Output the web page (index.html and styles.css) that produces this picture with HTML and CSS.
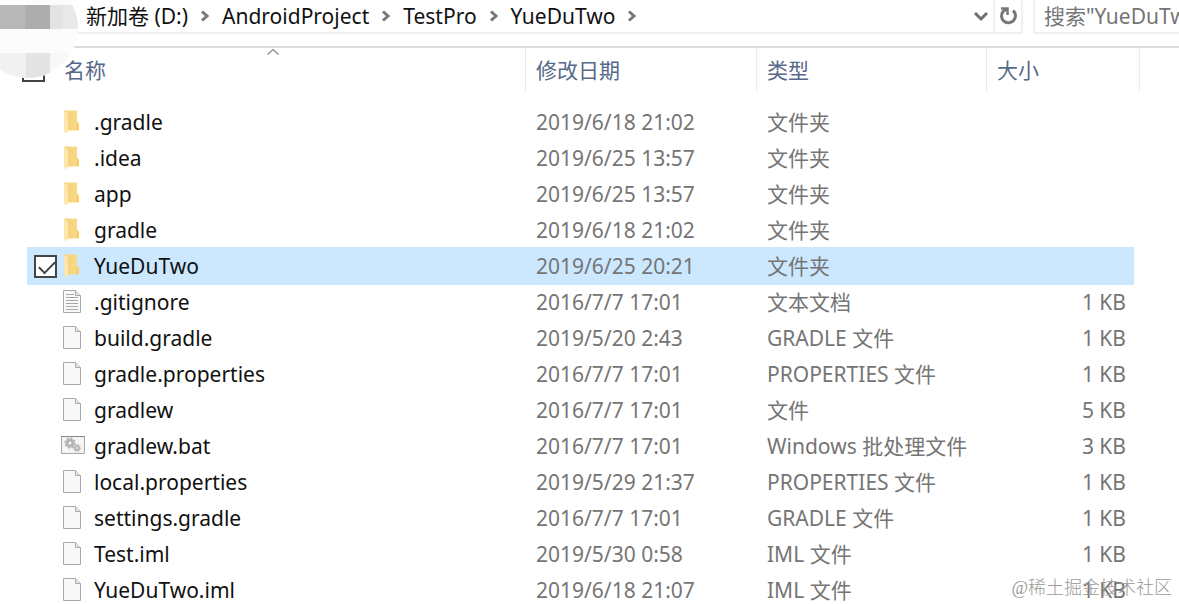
FILE: index.html
```html
<!DOCTYPE html>
<html lang="zh-CN">
<head>
<meta charset="utf-8">
<title>YueDuTwo</title>
<link rel="stylesheet" href="styles.css">
</head>
<body>
<svg class="defs" aria-hidden="true">
  <defs>
    <linearGradient id="fold" x1="0" y1="0" x2="1" y2="0"><stop offset="0" stop-color="#f3d07a"/><stop offset="1" stop-color="#fadb87"/></linearGradient>
    <symbol id="folder" viewBox="0 0 24 26">
      <path d="M3 1.500h13v11l2 2v7H6z" fill="url(#fold)"/>
      <path d="M15 13h1l2 2v6h-3z" fill="#f6cf70"/>
      <path d="M3 1.500l4 3v16l-1 4-3-2z" fill="#fce6ab"/>
    </symbol>
    <symbol id="page" viewBox="0 0 24 26">
      <path d="M2.500 1.500h12l5 5v17h-17z" fill="#f8f8f8" stroke="#a9a9a9"/>
      <path d="M14.500 1.500v5h5" fill="#e4e4e4" stroke="#a9a9a9"/>
    </symbol>
    <symbol id="text" viewBox="0 0 24 26">
      <use href="#page"/>
      <path d="M5 5.500h8M5 8.500h12M5 11.500h12M5 14.500h12M5 17.500h12M5 20.500h12" stroke="#a8a8a8"/>
    </symbol>
    <symbol id="batch" viewBox="0 0 24 26">
      <path d="M.5 3.500h23v17H.5z" fill="#f4f4f4" stroke="#a8a8a8"/>
      <path d="M0 3.500h24" stroke="#888"/>
      <circle cx="9" cy="10" r="3" fill="none" stroke="#b4b4b4" stroke-width="3"/>
      <circle cx="9" cy="10" r="5" fill="none" stroke="#b4b4b4" stroke-width="1.500" stroke-dasharray="2 1.900"/>
      <circle cx="16" cy="15" r="2" fill="none" stroke="#b4b4b4" stroke-width="2"/>
      <circle cx="16" cy="15" r="3.500" fill="none" stroke="#b4b4b4" stroke-dasharray="1.500 1.200"/>
    </symbol>
    <symbol id="chevron" viewBox="0 0 10 14"><path d="M2 2.500l5 4.500-5 4.500" fill="none" stroke="#777" stroke-width="3"/></symbol>
  </defs>
</svg>
<main class="explorer">
  <header class="toolbar">
    <nav class="address" aria-label="路径">
      <a href="#">新加卷 (D:)</a><svg class="chevron"><use href="#chevron"/></svg>
      <a href="#">AndroidProject</a><svg class="chevron"><use href="#chevron"/></svg>
      <a href="#">TestPro</a><svg class="chevron"><use href="#chevron"/></svg>
      <a href="#">YueDuTwo</a><svg class="chevron"><use href="#chevron"/></svg>
      <button class="history" type="button" aria-label="历史记录"><svg width="16" height="12" viewBox="0 0 16 12"><path d="M2 3l6 6 6-6" fill="none" stroke="#707070" stroke-width="3"/></svg></button>
    </nav>
    <button class="refresh" type="button" aria-label="刷新"><svg width="20" height="20" viewBox="0 0 20 20"><path d="M15 4.500A7 7 0 1 1 5 5.500L8.500 3" fill="none" stroke="#777" stroke-width="3"/><path d="M3 2.500h6.500V9" fill="none" stroke="#777" stroke-width="2.500"/></svg></button>
    <input class="search" type="text" aria-label="搜索" placeholder='搜索"YueDuTwo"'>
  </header>
  <table class="files">
    <colgroup><col class="col-check"><col><col class="col-date"><col class="col-type"><col class="col-size"><col class="col-end"></colgroup>
    <thead>
      <tr>
        <th class="check"><input class="box" type="checkbox" aria-label="全选"></th>
        <th class="name-head">名称<svg class="sort" width="14" height="8" viewBox="0 0 14 8"><path d="M1.500 6.500L7 1.500l5.500 5" fill="none" stroke="#888" stroke-width="1.200"/></svg></th>
        <th class="split">修改日期</th><th class="split">类型</th><th class="split end" colspan="2">大小</th>
      </tr>
    </thead>
    <tbody>
      <tr><td></td><td><span class="name"><svg class="icon"><use href="#folder"/></svg>.gradle</span></td><td>2019/6/18 21:02</td><td>文件夹</td><td></td><td></td></tr>
      <tr><td></td><td><span class="name"><svg class="icon"><use href="#folder"/></svg>.idea</span></td><td>2019/6/25 13:57</td><td>文件夹</td><td></td><td></td></tr>
      <tr><td></td><td><span class="name"><svg class="icon"><use href="#folder"/></svg>app</span></td><td>2019/6/25 13:57</td><td>文件夹</td><td></td><td></td></tr>
      <tr><td></td><td><span class="name"><svg class="icon"><use href="#folder"/></svg>gradle</span></td><td>2019/6/18 21:02</td><td>文件夹</td><td></td><td></td></tr>
      <tr class="selected"><td class="check"><input class="box" type="checkbox" aria-label="选择 YueDuTwo" checked></td><td><span class="name"><svg class="icon"><use href="#folder"/></svg>YueDuTwo</span></td><td>2019/6/25 20:21</td><td>文件夹</td><td></td><td></td></tr>
      <tr><td></td><td><span class="name"><svg class="icon"><use href="#text"/></svg>.gitignore</span></td><td>2016/7/7 17:01</td><td>文本文档</td><td>1 KB</td><td></td></tr>
      <tr><td></td><td><span class="name"><svg class="icon"><use href="#page"/></svg>build.gradle</span></td><td>2019/5/20 2:43</td><td>GRADLE 文件</td><td>1 KB</td><td></td></tr>
      <tr><td></td><td><span class="name"><svg class="icon"><use href="#page"/></svg>gradle.properties</span></td><td>2016/7/7 17:01</td><td>PROPERTIES 文件</td><td>1 KB</td><td></td></tr>
      <tr><td></td><td><span class="name"><svg class="icon"><use href="#page"/></svg>gradlew</span></td><td>2016/7/7 17:01</td><td>文件</td><td>5 KB</td><td></td></tr>
      <tr><td></td><td><span class="name"><svg class="icon"><use href="#batch"/></svg>gradlew.bat</span></td><td>2016/7/7 17:01</td><td>Windows 批处理文件</td><td>3 KB</td><td></td></tr>
      <tr><td></td><td><span class="name"><svg class="icon"><use href="#page"/></svg>local.properties</span></td><td>2019/5/29 21:37</td><td>PROPERTIES 文件</td><td>1 KB</td><td></td></tr>
      <tr><td></td><td><span class="name"><svg class="icon"><use href="#page"/></svg>settings.gradle</span></td><td>2016/7/7 17:01</td><td>GRADLE 文件</td><td>1 KB</td><td></td></tr>
      <tr><td></td><td><span class="name"><svg class="icon"><use href="#page"/></svg>Test.iml</span></td><td>2019/5/30 0:58</td><td>IML 文件</td><td>1 KB</td><td></td></tr>
      <tr><td></td><td><span class="name"><svg class="icon"><use href="#page"/></svg>YueDuTwo.iml</span></td><td>2019/6/18 21:07</td><td>IML 文件</td><td>1 KB</td><td></td></tr>
    </tbody>
  </table>
  <svg class="mosaic" width="80" height="80" viewBox="0 0 80 80" aria-hidden="true">
    <clipPath id="disc"><circle cx="28" cy="28" r="50"/></clipPath>
    <g clip-path="url(#disc)">
      <path d="M0 0h80v80H0z" fill="#fcfcfc"/>
      <path d="M0 5h25v24H0z" fill="#b8b8b8"/><path d="M25 5h25v24H25z" fill="#adadad"/>
      <path d="M50 5h13v24H50z" fill="#e3e3e3"/><path d="M63 5h17v24H63z" fill="#e9e9e9"/>
      <path d="M0 53h26v27H0z" fill="#f1f1f1"/><path d="M26 53h24v27H26z" fill="#e4e4e4"/><path d="M50 53h30v27H50z" fill="#f8f8f8"/>
    </g>
  </svg>
  <div class="watermark">@稀土掘金技术社区</div>
</main>
</body>
</html>
```
FILE: styles.css
```css
* { box-sizing: border-box; }

body {
  margin: 0;
  background: #fff;
  color: #111;
  font: 21px/28px "Noto Sans", "Noto Sans CJK SC", sans-serif;
}

button,
input {
  margin: 0;
  padding: 0;
  border: 0;
  background: none;
  font: inherit;
}

.defs { position: absolute; width: 0; height: 0; }

.explorer {
  position: relative;
  height: 100vh;
  overflow: hidden;
}

.toolbar {
  display: flex;
  height: 48px;
  padding-bottom: 12px;
  border-bottom: 2px solid #dcdcdc;
}

.address {
  display: flex;
  flex: 1;
  align-items: center;
  gap: 12px;
  padding-left: 86px;
  border-bottom: 2px solid #efefef;
  white-space: nowrap;
}

.address a { color: inherit; text-decoration: none; }

.chevron { width: 10px; height: 14px; }

.history {
  display: flex;
  margin-left: auto;
  padding-right: 4px;
}

.refresh {
  display: flex;
  align-items: center;
  justify-content: center;
  width: 30px;
  border: solid #efefef;
  border-width: 0 2px 2px;
}

.search {
  width: 146px;
  margin-left: 10px;
  padding-left: 9px;
  border: solid #efefef;
  border-width: 0 0 2px 2px;
  border-radius: 0;
}

.search::placeholder { color: #757575; opacity: 1; }

.files {
  table-layout: fixed;
  width: calc(100% - 66px);
  margin-left: 27px;
  border-spacing: 0;
  color: #757575;
}

.col-check { width: 34px; }
.col-date { width: 231px; }
.col-type { width: 230px; }
.col-size { width: 148px; }
.col-end { width: 6px; }

th,
td {
  padding: 0;
  text-align: left;
  white-space: nowrap;
}

th {
  height: 44px;
  color: #56698a;
  font-weight: 400;
}

thead .check { padding-left: 0; }
thead .check .box { margin-left: -5px; }

.name-head { position: relative; padding-left: 3px; }
.sort { position: absolute; top: 0; left: 205px; }

.split { padding-left: 10px; border-left: 1px solid #ebebeb; }
.end { border-right: 1px solid #ebebeb; }

tbody::before {
  content: "";
  display: table-row;
  height: 12px;
}

td { height: 36px; }
td:nth-child(3),
td:nth-child(4) { padding-left: 11px; }
td:nth-child(5) { padding-right: 8px; text-align: right; }

.name {
  display: flex;
  align-items: center;
  gap: 9px;
  color: #111;
}

.icon { width: 24px; height: 26px; }

.selected td:not(:last-child) {
  background: #cce8ff;
  box-shadow: 0 1px #cce8ff, 0 -1px #cce8ff;
}

.check { padding-left: 7px; }

.box {
  display: block;
  appearance: none;
  width: 23px;
  height: 23px;
  border: 2px solid #444;
  background: #fff;
}

.box:checked::before {
  content: "";
  display: block;
  width: 14px;
  height: 7px;
  margin: 4px 3px;
  border: solid #444;
  border-width: 0 0 2px 2px;
  transform: rotate(-45deg);
}

.mosaic { position: absolute; top: 0; left: 0; }

.watermark {
  position: absolute;
  right: 7px;
  bottom: 2px;
  color: #999;
  font: 300 18px/28px "Liberation Serif", "Noto Sans CJK SC", sans-serif;
}
```
